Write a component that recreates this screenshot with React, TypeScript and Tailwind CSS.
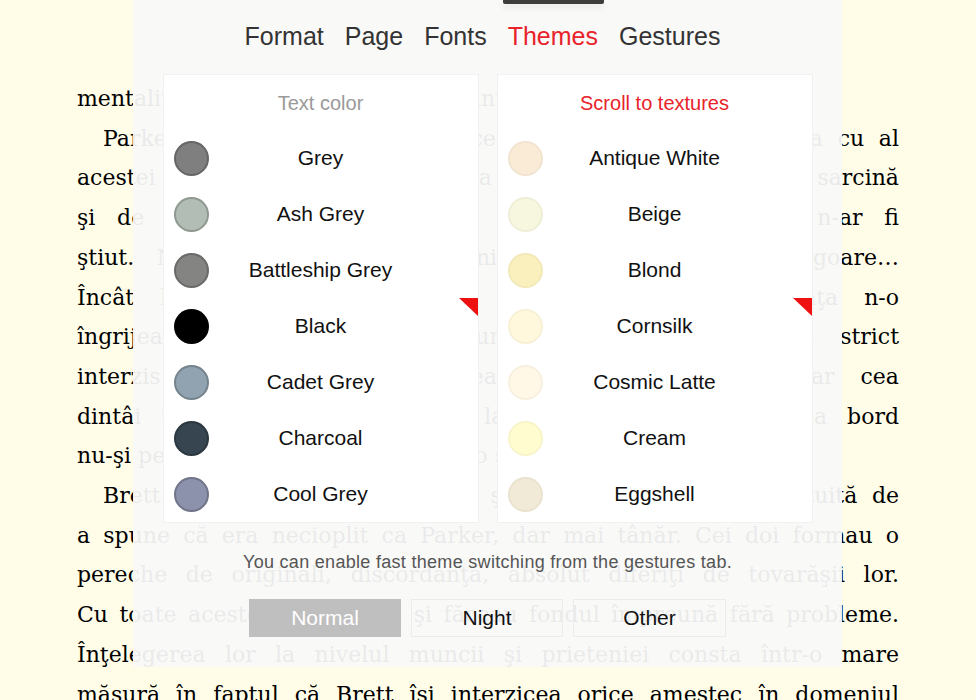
import React from "react"

type Line = { text: string; indent?: boolean; last?: boolean }

const bookLines: Line[] = [
  { text: "mentalitate care nu mai avea loc printre oamenii de azi.", last: true },
  { text: "Parker fusese obişnuit să muncească singur, dar se împăca cu al", indent: true },
  { text: "acestei echipe şef, care îi dădea de fiecare dată câte o sarcină" },
  { text: "şi de fiecare dată o ducea la bun sfârşit, chiar dacă n-ar fi" },
  { text: "ştiut. Nimeni nu-l vedea, nimeni nu-l lăuda, om fără ogoare…" },
  { text: "Încât lumea spunea că e un lup singuratic, deşi viaţa n-o" },
  { text: "îngrijea deloc şi se ocupa numai de ceea ce îi era strict" },
  { text: "interzis celorlalţi. Nu se temea de nimic pe lume, iar cea" },
  { text: "dintâi regulă a lui era să nu lase pe nimeni să urce la bord" },
  { text: "nu-şi permitea nicio greşeală şi nicio slăbiciune arătată.", last: true },
  { text: "Brett avea cam aceeaşi vârstă, şi n-ar fi o exagerare gratuită de", indent: true },
  { text: "a spune că era necioplit ca Parker, dar mai tânăr. Cei doi formau o" },
  { text: "pereche de originali, discordanţă, absolut diferiţi de tovarăşii lor." },
  { text: "Cu toate acestea, colaborau şi făceau fondul împreună fără probleme." },
  { text: "Înţelegerea lor la nivelul muncii şi prieteniei consta într-o mare" },
  { text: "măsură în faptul că Brett îşi interzicea orice amestec în domeniul" },
]

const textColors = [
  { name: "Grey", color: "#7f7f7f" },
  { name: "Ash Grey", color: "#b2beb5" },
  { name: "Battleship Grey", color: "#848482" },
  { name: "Black", color: "#000000" },
  { name: "Cadet Grey", color: "#91a3b0" },
  { name: "Charcoal", color: "#36454f" },
  { name: "Cool Grey", color: "#8c92ac" },
]

const textures = [
  { name: "Antique White", color: "#faebd7" },
  { name: "Beige", color: "#f7f7df" },
  { name: "Blond", color: "#faf0be" },
  { name: "Cornsilk", color: "#fff8dc" },
  { name: "Cosmic Latte", color: "#fff8e7" },
  { name: "Cream", color: "#fffdd0" },
  { name: "Eggshell", color: "#f0ead6" },
]

function Marker() {
  return (
    <svg width="19" height="18" viewBox="0 0 19 18" className="block">
      <polygon points="0,0 19,0 19,18" fill="#ee1111" />
    </svg>
  )
}

function ColorCard({
  title,
  titleClass,
  items,
  ringClass,
}: {
  title: string
  titleClass: string
  items: { name: string; color: string }[]
  ringClass: string
}) {
  return (
    <div className="w-[316px] bg-white border border-[#f1f1f1]">
      <div className={`h-[55px] flex items-center justify-center text-[20px] ${titleClass}`}>{title}</div>
      {items.map((item, i) => (
        <div key={item.name} className="h-[56px] grid grid-cols-[46px_1fr_46px] items-center">
          <div className="pl-[10px] flex items-center">
            <span
              className={`w-[35px] h-[35px] rounded-full border-2 ${ringClass}`}
              style={{ backgroundColor: item.color }}
            />
          </div>
          <div className="text-center text-[21px] text-[#111]">{item.name}</div>
          <div className="self-start flex justify-end">{i === 3 ? <Marker /> : null}</div>
        </div>
      ))}
    </div>
  )
}

export default function App() {
  return (
    <div className="relative w-full h-[700px] overflow-hidden bg-[#fffde8]">
      {/* Book page */}
      <div className="px-[77px] pt-[79px] text-[22px] leading-[39.7px] text-black font-['DejaVu_Serif',serif]">
        {bookLines.map((l, i) => (
          <div
            key={i}
            className={
              l.last
                ? `text-left ${l.indent ? "indent-[26px]" : ""}`
                : `text-justify [text-align-last:justify] ${l.indent ? "indent-[26px]" : ""}`
            }
          >
            {l.text}
          </div>
        ))}
      </div>

      {/* Settings sheet over the page */}
      <div className="absolute top-0 left-[133px] w-[709px] h-[667px] bg-[#f9f9f9]/[0.94] flex flex-col items-center font-['Liberation_Sans',Arial,sans-serif]">
        <div className="self-start ml-[370px] w-[101px] h-[4px] bg-[#3d3d3d] rounded-b-[2px] shadow-[0_4px_6px_rgba(0,0,0,0.08)]" />

        <div className="mt-[18px] mr-[10px] h-[28px] flex items-center gap-[21px] text-[25px] leading-[28px] text-[#333]">
          <span>Format</span>
          <span>Page</span>
          <span>Fonts</span>
          <span className="text-[#e8232a]">Themes</span>
          <span>Gestures</span>
        </div>

        <div className="mt-[24px] flex gap-[18px]">
          <ColorCard title="Text color" titleClass="text-[#9a9a9a]" items={textColors} ringClass="border-black/20" />
          <ColorCard title="Scroll to textures" titleClass="text-[#e8232a]" items={textures} ringClass="border-black/[0.03]" />
        </div>

        <p className="mt-[28px] text-[18px] leading-[22px] tracking-[0.3px] text-[#555]">
          You can enable fast theme switching from the gestures tab.
        </p>

        <div className="mt-[26px] flex gap-[10px] text-[21px]">
          <button className="w-[152px] h-[38px] bg-[#bcbcbc]/95 text-white">Normal</button>
          <button className="w-[152px] h-[38px] border border-[#ececec] text-[#111]">Night</button>
          <button className="w-[153px] h-[38px] border border-[#ececec] text-[#111]">Other</button>
        </div>
      </div>
    </div>
  )
}
